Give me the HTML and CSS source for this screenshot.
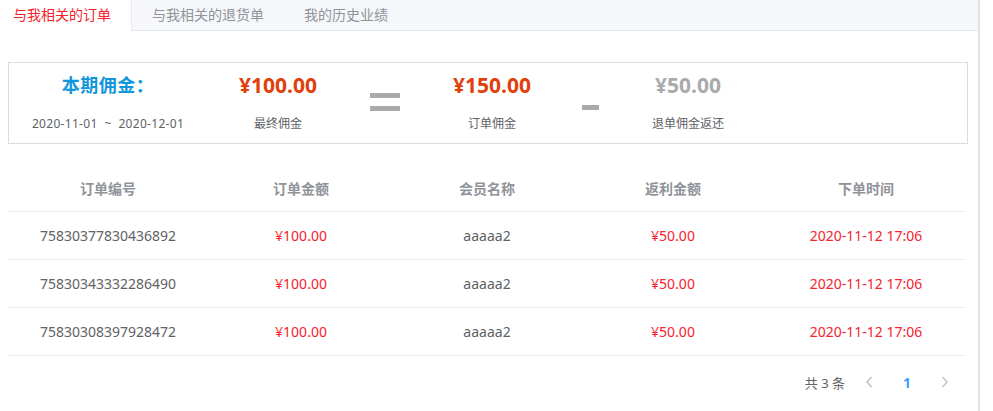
FILE: index.html
```html
<!DOCTYPE html>
<html lang="zh-CN">
<head>
  <meta charset="UTF-8">
  <meta name="viewport" content="width=device-width, initial-scale=1.0">
  <title>我的佣金</title>
  <link rel="stylesheet" href="styles.css">
</head>
<body>
  <div class="page">
    <div class="tabs">
      <div class="tab active">与我相关的订单</div>
      <div class="tab">与我相关的退货单</div>
      <div class="tab">我的历史业绩</div>
    </div>

    <div class="summary">
      <div class="item item-period">
        <div class="period-title">本期佣金：</div>
        <div class="label date">2020-11-01 &nbsp;~ &nbsp;2020-12-01</div>
      </div>
      <div class="item item-money">
        <div class="amount">¥100.00</div>
        <div class="label">最终佣金</div>
      </div>
      <div class="op op-eq"><span class="bar"></span><span class="bar"></span></div>
      <div class="item item-money">
        <div class="amount">¥150.00</div>
        <div class="label">订单佣金</div>
      </div>
      <div class="op op-minus"><span class="bar"></span></div>
      <div class="item item-money">
        <div class="amount muted">¥50.00</div>
        <div class="label">退单佣金返还</div>
      </div>
    </div>

    <div class="table">
      <div class="row head">
        <div>订单编号</div>
        <div>订单金额</div>
        <div>会员名称</div>
        <div>返利金额</div>
        <div>下单时间</div>
      </div>
      <div class="row">
        <div>75830377830436892</div>
        <div class="red">¥100.00</div>
        <div>aaaaa2</div>
        <div class="red">¥50.00</div>
        <div class="red">2020-11-12 17:06</div>
      </div>
      <div class="row">
        <div>75830343332286490</div>
        <div class="red">¥100.00</div>
        <div>aaaaa2</div>
        <div class="red">¥50.00</div>
        <div class="red">2020-11-12 17:06</div>
      </div>
      <div class="row">
        <div>75830308397928472</div>
        <div class="red">¥100.00</div>
        <div>aaaaa2</div>
        <div class="red">¥50.00</div>
        <div class="red">2020-11-12 17:06</div>
      </div>
    </div>

    <div class="pager">
      <span class="total">共 3 条</span>
      <span class="btn">
        <svg width="8" height="12" viewBox="0 0 8 12"><path d="M6.5 1 L2 6 L6.5 11" fill="none" stroke="#c0c4cc" stroke-width="1.6"/></svg>
      </span>
      <span class="btn current">1</span>
      <span class="btn">
        <svg width="8" height="12" viewBox="0 0 8 12"><path d="M1.5 1 L6 6 L1.5 11" fill="none" stroke="#c0c4cc" stroke-width="1.6"/></svg>
      </span>
    </div>
  </div>
</body>
</html>
```

FILE: styles.css
```css
html, body {
  margin: 0;
  padding: 0;
  background-color: #fff;
  font-family: 'Noto Sans', 'Noto Sans CJK SC', sans-serif;
  color: #606266;
}

.page {
  width: 980px;
  height: 411px;
  border-right: 2px solid #e2e2e6;
  box-sizing: border-box;
}

.tabs {
  display: flex;
  height: 31px;
  background-color: #f5f7fa;
  border-bottom: 1px solid #e4e7ed;
  box-sizing: border-box;
}

.tab {
  padding: 0 20px;
  line-height: 30px;
  font-size: 14px;
  color: #909399;
}

.tab.active {
  padding-left: 13px;
  background-color: #fff;
  color: #f5222d;
  border-right: 1px solid #e4e7ed;
  height: 31px;
}

.summary {
  display: flex;
  margin: 31px 0 0 8px;
  width: 960px;
  height: 82px;
  border: 1px solid #dcdcdc;
  box-sizing: border-box;
  padding-top: 10px;
}

.item {
  display: flex;
  flex-direction: column;
  align-items: center;
}

.item-period {
  width: 192px;
}

.item-money {
  width: 154px;
}

.period-title {
  font-size: 18px;
  font-weight: bold;
  color: #1296db;
  line-height: 24px;
  padding-left: 6px;
  letter-spacing: 0.5px;
}

.amount {
  font-size: 21px;
  font-weight: bold;
  color: #e0400c;
  line-height: 24px;
}

.amount.muted {
  color: #aaa;
}

.label {
  margin-top: 17px;
  font-size: 12px;
  line-height: 20px;
  color: #606266;
}

.label.date {
  letter-spacing: 0.3px;
  padding-left: 6px;
}

.op {
  display: flex;
  flex-direction: column;
  align-items: center;
}

.op-eq {
  width: 60px;
  padding-top: 20px;
  gap: 8px;
}

.op-eq .bar {
  width: 30px;
  height: 5px;
  background-color: #aaa;
}

.op-minus {
  width: 42px;
  padding-top: 32px;
}

.op-minus .bar {
  width: 17px;
  height: 5px;
  background-color: #aaa;
}

.table {
  margin: 20px 0 0 8px;
  width: 958px;
}

.row {
  display: grid;
  grid-template-columns: 200px 186px 186px 186px 200px;
  height: 48px;
  box-sizing: border-box;
  align-items: center;
  border-bottom: 1px solid #ebeef5;
  font-size: 14px;
  text-align: center;
}

.row.head {
  color: #909399;
  font-weight: bold;
}

.red {
  color: #f5222d;
}

.pager {
  display: flex;
  justify-content: flex-end;
  align-items: center;
  width: 964px;
  margin-top: 12px;
  height: 28px;
  font-size: 13px;
}

.total {
  margin-right: 5px;
  color: #606266;
}

.btn {
  width: 38px;
  display: flex;
  justify-content: center;
  align-items: center;
}

.btn.current {
  color: #409eff;
  font-weight: bold;
  font-size: 14px;
}
```
